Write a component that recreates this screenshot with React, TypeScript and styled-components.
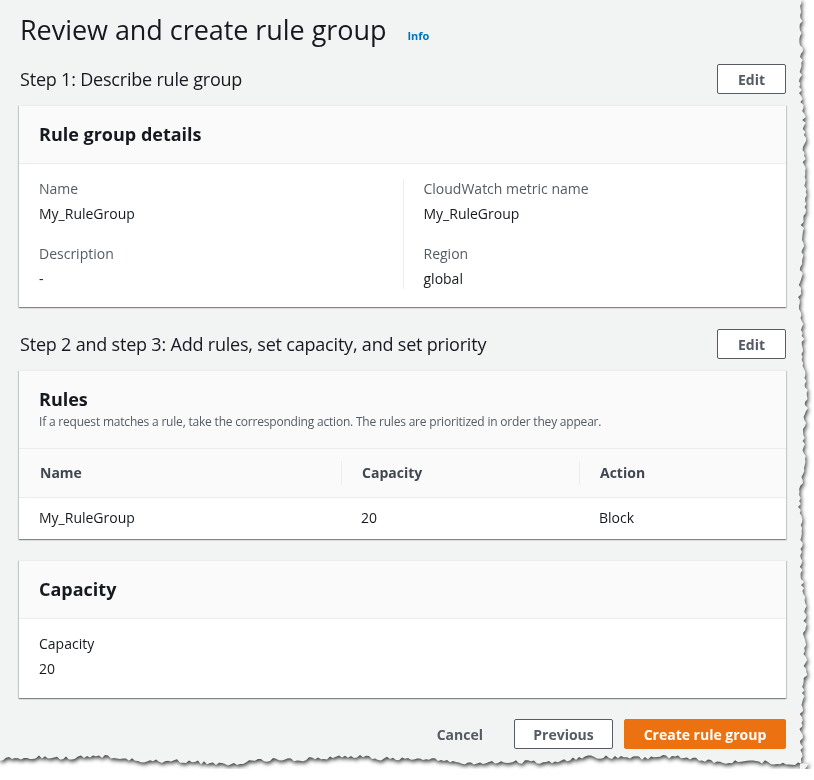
import React, { useMemo } from "react";
import styled, { createGlobalStyle } from "styled-components";

const GlobalStyle = createGlobalStyle`
  html, body {
    margin: 0;
    padding: 0;
    background: #fff;
  }
  body {
    font-family: "Open Sans", "Noto Sans", Arial, sans-serif;
    color: #16191f;
    -webkit-font-smoothing: antialiased;
  }
  * { box-sizing: border-box; }
`;

function tornEdge(): string {
  let seed = 42;
  const rnd = () => {
    seed = (seed * 9301 + 49297) % 233280;
    return seed / 233280;
  };
  const pts: string[] = ["0px 0px"];
  // right edge, top to bottom
  for (let y = 0; y <= 780; y += 3) {
    const off = 7 + Math.sin(y / 37) * 2.5 + Math.sin(y / 11) * 1 + (rnd() - 0.5) * 4;
    pts.push(`calc(100% - ${off.toFixed(1)}px) ${y}px`);
  }
  // bottom edge, right to left
  for (let x = 810; x >= 0; x -= 3) {
    const off = 9 + Math.sin(x / 45) * 3 + Math.sin(x / 13) * 1 + (rnd() - 0.5) * 4;
    pts.push(`${x}px calc(100% - ${off.toFixed(1)}px)`);
  }
  return `polygon(${pts.join(", ")})`;
}

type Field = { label: string; value: string };

const leftFields: Field[] = [
  { label: "Name", value: "My_RuleGroup" },
  { label: "Description", value: "-" },
];
const rightFields: Field[] = [
  { label: "CloudWatch metric name", value: "My_RuleGroup" },
  { label: "Region", value: "global" },
];

export default function App() {
  const clip = useMemo(() => tornEdge(), []);
  return (
    <>
      <GlobalStyle />
      <Shadow>
        <Sheet $clip={clip}>
          <Content>
            <TitleRow>
              <Title>Review and create rule group</Title>
              <InfoLink href="#">Info</InfoLink>
            </TitleRow>

            <StepRow>
              <StepTitle>Step 1: Describe rule group</StepTitle>
              <Button>Edit</Button>
            </StepRow>

            <Card>
              <CardHeader>
                <CardTitle>Rule group details</CardTitle>
              </CardHeader>
              <DetailsGrid>
                <Column>
                  {leftFields.map((f) => (
                    <KeyValue key={f.label}>
                      <Label>{f.label}</Label>
                      <Value>{f.value}</Value>
                    </KeyValue>
                  ))}
                </Column>
                <Column $divided>
                  {rightFields.map((f) => (
                    <KeyValue key={f.label}>
                      <Label>{f.label}</Label>
                      <Value>{f.value}</Value>
                    </KeyValue>
                  ))}
                </Column>
              </DetailsGrid>
            </Card>

            <StepRow $spaced>
              <StepTitle>Step 2 and step 3: Add rules, set capacity, and set priority</StepTitle>
              <Button>Edit</Button>
            </StepRow>

            <Card>
              <CardHeader>
                <CardTitle>Rules</CardTitle>
                <CardDescription>
                  If a request matches a rule, take the corresponding action. The rules are prioritized in order they appear.
                </CardDescription>
              </CardHeader>
              <Table>
                <HeadCell>
                  <HeadText>Name</HeadText>
                </HeadCell>
                <HeadCell>
                  <HeadText $divided>Capacity</HeadText>
                </HeadCell>
                <HeadCell>
                  <HeadText $divided>Action</HeadText>
                </HeadCell>
                <BodyCell>My_RuleGroup</BodyCell>
                <BodyCell>20</BodyCell>
                <BodyCell>Block</BodyCell>
              </Table>
            </Card>

            <Card $gapTop>
              <CardHeader>
                <CardTitle>Capacity</CardTitle>
              </CardHeader>
              <CardBody>
                <Label $dark>Capacity</Label>
                <Value>20</Value>
              </CardBody>
            </Card>

            <Footer>
              <LinkButton>Cancel</LinkButton>
              <Button $wide>Previous</Button>
              <PrimaryButton>Create rule group</PrimaryButton>
            </Footer>
          </Content>
        </Sheet>
      </Shadow>
    </>
  );
}

const Shadow = styled.div`
  width: 814px;
  filter: drop-shadow(1px 2px 2px rgba(0, 0, 0, 0.8));
`;

const Sheet = styled.div<{ $clip: string }>`
  width: 810px;
  background: #f2f3f3;
  clip-path: ${(p) => p.$clip};
  padding-bottom: 20px;
`;

const Content = styled.div`
  width: 786px;
  padding: 11px 0 0 19px;
`;

const TitleRow = styled.div`
  display: flex;
  align-items: baseline;
  gap: 21px;
  padding-left: 1px;
`;

const Title = styled.h1`
  margin: 0;
  font-size: 27px;
  font-weight: 400;
  line-height: 38px;
  letter-spacing: -0.05px;
  color: #16191f;
`;

const InfoLink = styled.a`
  font-size: 11px;
  font-weight: 700;
  color: #0073bb;
  text-decoration: none;
`;

const StepRow = styled.div<{ $spaced?: boolean }>`
  display: flex;
  align-items: center;
  justify-content: space-between;
  height: 30px;
  margin-top: ${(p) => (p.$spaced ? "22px" : "15px")};
  margin-bottom: 11px;
  padding-left: 1px;
`;

const StepTitle = styled.h2`
  margin: 0;
  font-size: 18px;
  font-weight: 400;
  line-height: 22px;
  letter-spacing: -0.2px;
  color: #16191f;
`;

const Button = styled.button<{ $wide?: boolean }>`
  height: 30px;
  width: ${(p) => (p.$wide ? "99px" : "69px")};
  padding: 0;
  border: 1px solid #545b64;
  border-radius: 2px;
  background: #fff;
  color: #545b64;
  font-family: inherit;
  font-size: 14px;
  font-weight: 700;
  cursor: pointer;
`;

const LinkButton = styled.button`
  height: 30px;
  padding: 0 20px;
  border: none;
  background: transparent;
  color: #545b64;
  font-family: inherit;
  font-size: 14px;
  font-weight: 700;
  cursor: pointer;
`;

const PrimaryButton = styled.button`
  height: 30px;
  width: 162px;
  padding: 0;
  border: 1px solid #ec7211;
  border-radius: 2px;
  background: #ec7211;
  color: #fff;
  font-family: inherit;
  font-size: 14px;
  font-weight: 700;
  cursor: pointer;
`;

const Card = styled.section<{ $gapTop?: boolean }>`
  background: #fff;
  margin-top: ${(p) => (p.$gapTop ? "21px" : "0")};
  box-shadow: 0 1px 1px 0 rgba(0, 28, 36, 0.3), 1px 1px 1px 0 rgba(0, 28, 36, 0.15),
    -1px 1px 1px 0 rgba(0, 28, 36, 0.15);
  border-top: 1px solid #eaeded;
`;

const CardHeader = styled.div`
  background: #fafafa;
  border-bottom: 1px solid #eaeded;
  padding: 17px 20px 18px;
`;

const CardTitle = styled.h3`
  margin: 0;
  font-size: 18px;
  font-weight: 700;
  line-height: 22px;
  color: #16191f;
`;

const CardDescription = styled.p`
  margin: 4px 0 0;
  font-size: 12px;
  line-height: 16px;
  letter-spacing: -0.2px;
  color: #545b64;
`;

const DetailsGrid = styled.div`
  display: grid;
  grid-template-columns: 1fr 1fr;
  padding: 15px 20px 18px;
`;

const Column = styled.div<{ $divided?: boolean }>`
  display: flex;
  flex-direction: column;
  gap: 20px;
  ${(p) => (p.$divided ? "border-left: 1px solid #eaeded; padding-left: 20px;" : "")}
`;

const KeyValue = styled.div`
  display: flex;
  flex-direction: column;
  gap: 5px;
`;

const Label = styled.div<{ $dark?: boolean }>`
  font-size: 14px;
  line-height: 20px;
  color: ${(p) => (p.$dark ? "#16191f" : "#545b64")};
`;

const Value = styled.div`
  font-size: 14px;
  line-height: 20px;
  color: #16191f;
`;

const CardBody = styled.div`
  display: flex;
  flex-direction: column;
  gap: 5px;
  padding: 15px 20px 19px;
`;

const Table = styled.div`
  display: grid;
  grid-template-columns: 322px 238px 1fr;
`;

const HeadCell = styled.div`
  background: #fafafa;
  border-bottom: 1px solid #eaeded;
  padding: 12px 0;
`;

const HeadText = styled.div<{ $divided?: boolean }>`
  padding-left: 20px;
  font-size: 14px;
  font-weight: 700;
  line-height: 24px;
  color: #414750;
  border-left: 1px solid ${(p) => (p.$divided ? "#eaeded" : "transparent")};
`;

const BodyCell = styled.div`
  padding: 10px 20px 11px;
  font-size: 14px;
  line-height: 20px;
  color: #16191f;
`;

const Footer = styled.div`
  display: flex;
  justify-content: flex-end;
  align-items: center;
  gap: 11px;
  margin-top: 21px;
`;
